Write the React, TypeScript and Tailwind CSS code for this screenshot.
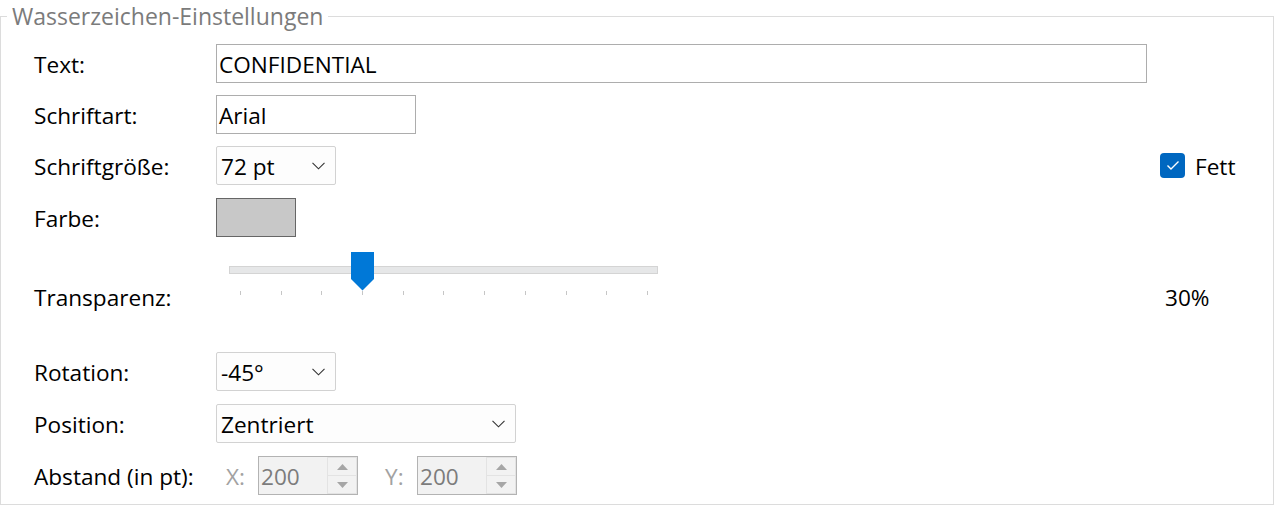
import React from 'react';

const FONT = { fontFamily: '"Open Sans", "Noto Sans", "Liberation Sans", sans-serif' };

const Chevron: React.FC = () => (
  <svg width="13" height="8" viewBox="0 0 13 8" className="shrink-0">
    <polyline points="0.5,0.8 6.5,6.8 12.5,0.8" fill="none" stroke="#333" strokeWidth="1.1" />
  </svg>
);

const Combo: React.FC<{ value: string; width: string }> = ({ value, width }) => (
  <div className={`${width} h-[39px] shrink-0 flex items-center justify-between pl-[4px] pr-[10px] bg-[#fdfdfd] border border-[#d2d2d2] rounded-[2px]`}>
    <span className="leading-none pt-[3px]">{value}</span>
    <Chevron />
  </div>
);

const TextBox: React.FC<{ value: string; width: string }> = ({ value, width }) => (
  <div className={`${width} h-[39px] shrink-0 flex items-center pl-[2px] bg-white border border-[#adadad]`}>
    <span className="leading-none pt-[3px]">{value}</span>
  </div>
);

const Spinner: React.FC<{ value: string }> = ({ value }) => (
  <div className="w-[100px] h-[39px] shrink-0 flex bg-[#f2f2f2] border border-[#b3b3b3]">
    <div className="flex-1 flex items-center pl-[2px] pt-[3px] text-[#7c7c7c] leading-none">{value}</div>
    <div className="w-[30px] flex flex-col">
      <div className="flex-1 flex items-center justify-center border border-[#e3e3e3]">
        <svg width="11" height="6" viewBox="0 0 11 6"><polygon points="0,6 5.5,0 11,6" fill="#a6a6a6" /></svg>
      </div>
      <div className="flex-1 flex items-center justify-center border border-t-0 border-[#e3e3e3]">
        <svg width="11" height="6" viewBox="0 0 11 6"><polygon points="0,0 5.5,6 11,0" fill="#a6a6a6" /></svg>
      </div>
    </div>
  </div>
);

const Row: React.FC<{ label: string; className?: string; children: React.ReactNode }> = ({ label, className, children }) => (
  <div className={`flex items-center h-[39px] ${className || ''}`}>
    <div className="w-[215px] shrink-0 pl-[33px] pt-[3px] whitespace-nowrap">{label}</div>
    <div className="flex-1 flex items-center">{children}</div>
  </div>
);

const ticks = Array.from({ length: 11 }, (_, i) => i);

export default function App() {
  return (
    <div className="w-[1274px] h-[507px] bg-white text-black text-[22.6px]" style={FONT}>
      <fieldset className="h-[505px] border border-[#dcdcdc] m-0 p-0">
        <legend className="ml-[6px] px-[5px] h-[32px] leading-[32px] text-[23px] text-[#7b7b7b]">Wasserzeichen-Einstellungen</legend>
        <div className="flex flex-col pt-[12px]">
          <Row label="Text:">
            <TextBox value="CONFIDENTIAL" width="w-[931px]" />
          </Row>
          <Row label="Schriftart:" className="mt-[12px]">
            <TextBox value="Arial" width="w-[200px]" />
          </Row>
          <Row label="Schriftgröße:" className="mt-[12px]">
            <Combo value="72 pt" width="w-[120px]" />
            <div className="flex-1" />
            <div className="w-[113px] shrink-0 flex items-center gap-[10px]">
              <div className="w-[25px] h-[25px] rounded-[4px] bg-[#0067c0] flex items-center justify-center">
                <svg width="14" height="11" viewBox="0 0 14 11">
                  <polyline points="1.5,5.5 5,9 12.5,1.5" fill="none" stroke="#fff" strokeWidth="1.4" />
                </svg>
              </div>
              <span className="pt-[3px]">Fett</span>
            </div>
          </Row>
          <Row label="Farbe:" className="mt-[13px]">
            <div className="w-[80px] h-[39px] bg-[#c8c8c8] border border-[#666]" />
          </Row>
          <div className="flex h-[80px] mt-[13px]">
            <div className="w-[215px] shrink-0 pl-[33px] pt-[33px] leading-[30px]">Transparenz:</div>
            <div className="flex-1 flex">
              <div className="relative w-[445px] h-[50px] shrink-0">
                <div className="absolute left-[13px] top-[16px] w-[429px] h-[8px] bg-[#e6e7e8] border border-[#d4d4d4]" />
                <svg className="absolute left-[135px] top-[2px]" width="23" height="39" viewBox="0 0 23 39">
                  <polygon points="0,0 23,0 23,27 11.5,38.5 0,27" fill="#0078d7" />
                </svg>
                <div className="absolute left-[24px] top-[41px] w-[408px] flex justify-between">
                  {ticks.map(t => (
                    <div key={t} className="w-px h-[4px] bg-[#c6c6c6]" />
                  ))}
                </div>
              </div>
              <div className="flex-1" />
              <div className="w-[108px] shrink-0 pt-[33px] leading-[30px]">30%</div>
            </div>
          </div>
          <Row label="Rotation:" className="mt-[22px]">
            <Combo value="-45°" width="w-[120px]" />
          </Row>
          <Row label="Position:" className="mt-[13px]">
            <Combo value="Zentriert" width="w-[300px]" />
          </Row>
          <Row label="Abstand (in pt):" className="mt-[13px]">
            <span className="w-[42px] shrink-0 pl-[10px] pt-[3px] text-[#a2a2a2]">X:</span>
            <Spinner value="200" />
            <span className="w-[59px] shrink-0 pl-[27px] pt-[3px] text-[#a2a2a2]">Y:</span>
            <Spinner value="200" />
          </Row>
        </div>
      </fieldset>
    </div>
  );
}
